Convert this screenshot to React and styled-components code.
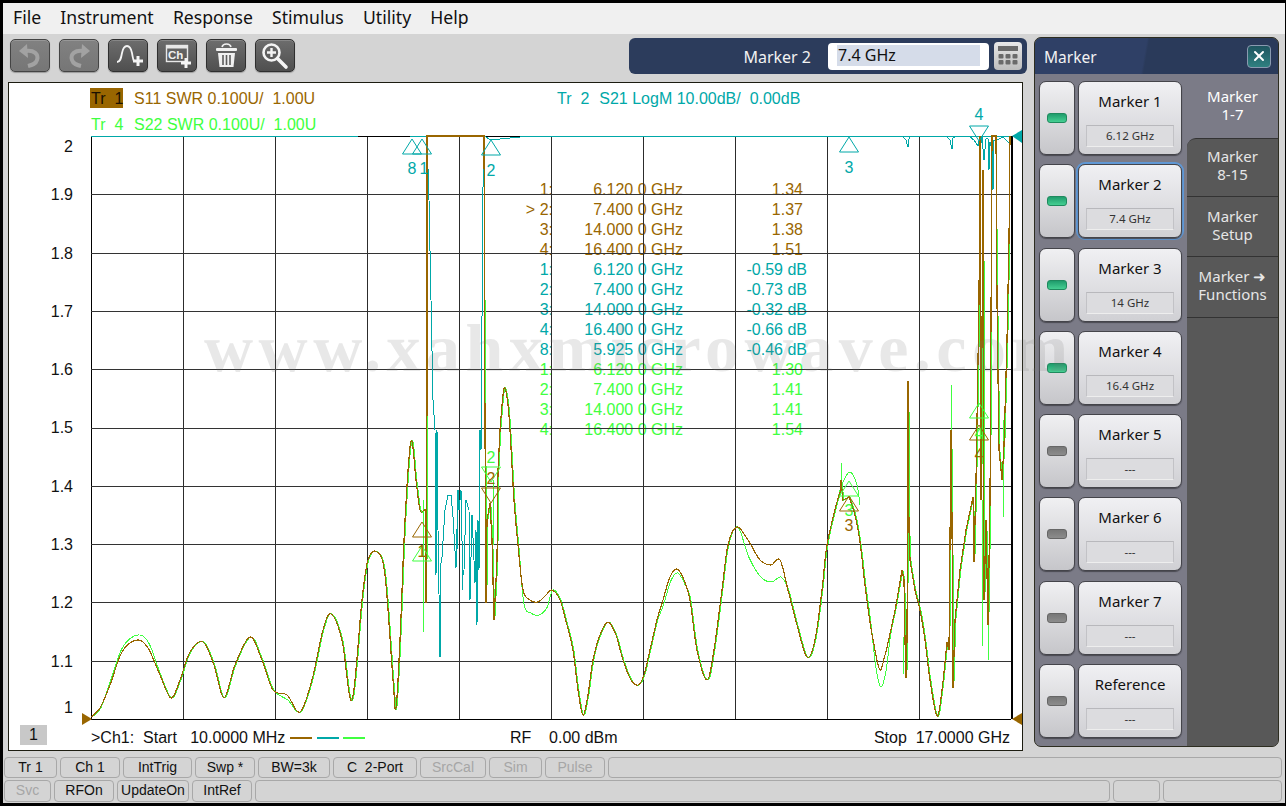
import React from 'react';
import styled, { createGlobalStyle } from 'styled-components';
import { X } from 'lucide-react';

const BROWN = '#996600';
const TEAL = '#00a8a8';
const GREEN = '#40ff40';
const UI_FONT = '"Noto Sans", "Open Sans", sans-serif';
const PLOT_FONT = '"Liberation Sans", Arial, sans-serif';

const GlobalStyle = createGlobalStyle`
    html, body { margin: 0; padding: 0; background: #000; }
    * { box-sizing: border-box; }
`;

const Screen = styled.div`
    position: relative;
    width: 1286px;
    height: 806px;
    padding: 3px 1px 3px 3px;
    background: #000;
    overflow: hidden;
    font-family: ${PLOT_FONT};
`;

const Window = styled.div`
    height: 800px;
    background: #d4d4d4;
    display: flex;
    flex-direction: column;
`;

const MenuBar = styled.div`
    height: 31px;
    flex: none;
    background: #f0f0f0;
    display: flex;
    align-items: center;
    gap: 19.2px;
    padding: 0 0 3px 10px;
    font-family: ${UI_FONT};
    font-size: 17.6px;
    color: #111;
`;

const Workspace = styled.div`
    height: 722px;
    flex: none;
    display: flex;
`;

const LeftColumn = styled.div`
    width: 1031px;
    flex: none;
`;

const ToolBar = styled.div`
    height: 48px;
    display: flex;
    align-items: flex-start;
    gap: 9px;
    padding: 5px 0 0 7px;
`;

const ToolButton = styled.div`
    width: 40px;
    height: 33px;
    border-radius: 5px;
    border: 1px solid ${p => (p.$disabled ? '#444' : '#2f2f2f')};
    background: ${p => (p.$disabled ? 'linear-gradient(#818181, #767676)' : 'linear-gradient(#6d6d6d, #4f4f4f)')};
    box-shadow: 0 1px 1px #9a9a9a, inset 0 1px 0 rgba(255,255,255,.18);
    svg { display: block; }
`;

const EntryBar = styled.div`
    margin: -1px 7px 0 auto;
    width: 398px;
    height: 36px;
    border-radius: 6px;
    background: #2c3c5c;
    display: flex;
    align-items: center;
    justify-content: flex-end;
    padding-right: 5px;
`;

const EntryLabel = styled.span`
    color: #f2f2f2;
    font-family: ${UI_FONT};
    font-size: 16px;
    margin-right: 17px;
    padding-top: 2px;
`;

const EntryInput = styled.div`
    width: 161px;
    height: 27px;
    border-radius: 4px;
    background: #fff;
    padding: 2px 9px;
`;

const EntrySelection = styled.div`
    height: 21px;
    line-height: 21px;
    padding-left: 1px;
    background: #d5dce9;
    color: #111;
    font-family: ${UI_FONT};
    font-size: 16px;
`;

const CalcButton = styled.div`
    width: 28px;
    height: 28px;
    margin-left: 5px;
    border-radius: 4px;
    background: linear-gradient(#e8e8e8, #bdbdbd);
    svg { display: block; }
`;

const Chart = styled.div`
    margin-left: 5px;
    width: 1015px;
    height: 669px;
    border: 1px solid #1c1c10;
    background: #fff;
    font-size: 16px;
`;

const ChartHeader = styled.div`
    height: 53px;
    padding: 5px 0 0 81px;
    display: grid;
    grid-template-columns: 467px 1fr;
    grid-auto-rows: 20px;
    row-gap: 6px;
    line-height: 21px;
    white-space: pre;
`;

const TraceTitle = styled.div`
    display: flex;
    gap: ${p => p.$gap || 11}px;
    color: ${p => p.$color};
`;

const TraceTag = styled.span`
    width: 33px;
    background: ${p => (p.$active ? BROWN : 'transparent')};
    color: ${p => (p.$active ? '#1a1000' : 'inherit')};
    padding-left: 1px;
`;

const PlotRow = styled.div`
    height: 583px;
    display: flex;
`;

const AxisLabels = styled.div`
    width: 82px;
    flex: none;
    padding: 1px 18px 0 0;
    display: grid;
    grid-template-rows: 48.3px repeat(8, 58.3px) 46px 20px;
    text-align: right;
    line-height: 20px;
    color: #111;
`;

const Plot = styled.div`
    position: relative;
    width: 920px;
    height: 583px;
    svg {
        position: relative;
        z-index: 1;
        display: block;
        overflow: visible;
    }
`;

const Readout = styled.div`
    position: absolute;
    left: 429px;
    top: 44px;
    display: grid;
    grid-template-columns: 33px 130px 124px;
    grid-auto-rows: 20px;
    line-height: 20px;
    white-space: pre;
`;

const ReadoutCell = styled.span`
    text-align: right;
    color: ${p => p.$color};
    padding-right: ${p => p.$pad || 0}px;
`;

const ChartFooter = styled.div`
    height: 31px;
    display: grid;
    grid-template-columns: 82px 419px 1fr auto;
    align-items: end;
    padding: 0 12px 2px 0;
    color: #111;
    white-space: pre;
    line-height: 20px;
`;

const ChannelBox = styled.div`
    width: 27px;
    height: 20px;
    margin: 0 0 3px 11px;
    background: #c8c8c8;
    text-align: center;
`;

const StartGroup = styled.div`
    display: flex;
    align-items: center;
`;

const LegendDash = styled.span`
    width: 22px;
    height: 2px;
    margin-left: ${p => p.$gap}px;
    background: ${p => p.$color};
`;

const MarkerPanel = styled.div`
    width: 245px;
    height: 710px;
    flex: none;
    margin-top: 3px;
    border-radius: 7px;
    overflow: hidden;
    background: #585858;
    border: 1px solid #2d2d20;
    display: flex;
    flex-direction: column;
`;

const PanelHeader = styled.div`
    height: 36px;
    flex: none;
    background: linear-gradient(100deg, #2f4066 0 45%, #2a3a5a 46%);
    color: #f2f2f2;
    font-family: ${UI_FONT};
    font-size: 15.5px;
    display: flex;
    align-items: center;
    justify-content: space-between;
    padding: 0 7px 0 9px;
    span { padding-top: 2px; }
`;

const CloseButton = styled.div`
    width: 24px;
    height: 23px;
    border-radius: 4px;
    border: 1px solid #8a9ab0;
    background: linear-gradient(#1f5560, #2f8080);
    color: #fff;
    display: flex;
    align-items: center;
    justify-content: center;
`;

const PanelBody = styled.div`
    flex: 1;
    display: flex;
    min-height: 0;
`;

const ButtonColumn = styled.div`
    width: 152px;
    flex: none;
    background: #7b7b87;
    padding: 7px 0 0 4px;
    display: grid;
    grid-template-columns: 36px 104px;
    grid-auto-rows: 74px;
    column-gap: 3px;
    row-gap: 9.3px;
`;

const LedButton = styled.div`
    border-radius: 7px;
    border: 1px solid #44444a;
    background: linear-gradient(#f0f0f2, #c6c6ca);
    box-shadow: 0 1px 1px #4a4a52;
    display: flex;
    align-items: center;
    justify-content: center;
`;

const Led = styled.span`
    width: 20px;
    height: 10px;
    border-radius: 3px;
    border: 1px solid ${p => (p.$on ? '#1f8a5e' : '#666')};
    background: ${p => (p.$on ? 'linear-gradient(#1f9c6c, #45cf92)' : 'linear-gradient(#777, #8c8c8c)')};
`;

const SoftKey = styled.div`
    border-radius: 7px;
    border: 1px solid #44444a;
    background: linear-gradient(#f0f0f3, #d0d0d4);
    box-shadow: 0 1px 1px #4a4a52${p => (p.$selected ? ', 0 0 0 2px #5f97d4' : '')};
    padding-top: 9px;
    text-align: center;
    font-family: ${UI_FONT};
    color: #111;
`;

const SoftKeyTitle = styled.div`
    font-size: 15px;
    line-height: 20px;
`;

const SoftKeyValue = styled.div`
    width: 88px;
    height: 22px;
    margin: 14px auto 0;
    border: 1px solid #c2c2c6;
    border-top-color: #b8b8bc;
    border-bottom-color: #eeeeee;
    background: #dcdcdf;
    font-size: 11.5px;
    line-height: 20px;
    color: #333;
`;

const TabColumn = styled.div`
    flex: 1;
    display: flex;
    flex-direction: column;
    background: #585858;
`;

const Tab = styled.div`
    height: ${p => p.$height}px;
    flex: none;
    padding-top: ${p => p.$pad}px;
    text-align: center;
    font-family: ${UI_FONT};
    font-size: 15px;
    line-height: 18px;
    color: ${p => (p.$active ? '#fff' : '#e6e6e6')};
    background: ${p => (p.$active ? '#7b7b87' : '#585858')};
    border-top: ${p => (p.$active ? 'none' : '1px solid #333')};
    border-top-left-radius: ${p => (p.$first ? '9px' : '0')};
`;

const ActiveTabCorner = styled.div`
    background: #7b7b87;
`;

const StatusRows = styled.div`
    padding: 1px 0 0 1px;
    display: flex;
    flex-direction: column;
    gap: 2px;
`;

const StatusRow = styled.div`
    display: flex;
    gap: 3px;
    height: ${p => p.$height}px;
`;

const StatusCell = styled.div`
    width: ${p => p.$width}px;
    flex: none;
    border: 1px solid #a8a8a8;
    border-radius: 4px;
    text-align: center;
    font-size: 14px;
    line-height: 19px;
    white-space: pre;
    color: ${p => (p.$off ? '#a6a6a6' : '#111')};
`;

const Watermark = styled.div`
    position: absolute;
    left: 204px;
    top: 309px;
    font-family: "Liberation Serif", serif;
    font-weight: 700;
    font-size: 68px;
    letter-spacing: 5.5px;
    line-height: 78px;
    white-space: nowrap;
    color: rgba(120, 120, 120, .17);
    pointer-events: none;
    z-index: 5;
`;

// smooth curve through the given points
function curve(pts) {
    let d = `M${pts[0][0]} ${pts[0][1]}`;
    for (let i = 0; i < pts.length - 1; i++) {
        const p0 = pts[i - 1] || pts[i];
        const p1 = pts[i];
        const p2 = pts[i + 1];
        const p3 = pts[i + 2] || p2;
        const c1x = p1[0] + (p2[0] - p0[0]) / 6;
        const c1y = p1[1] + (p2[1] - p0[1]) / 6;
        const c2x = p2[0] - (p3[0] - p1[0]) / 6;
        const c2y = p2[1] - (p3[1] - p1[1]) / 6;
        d += `C${c1x} ${c1y} ${c2x} ${c2y} ${p2[0]} ${p2[1]}`;
    }
    return d;
}

const line = pts => 'M' + pts.map(p => p.join(' ')).join('L');

// S11 is built from smooth stretches and raw spikes, in sweep order
const S11_PARTS = [
    { smooth: [[91,717],[100,708],[110,685],[122,652],[137,640],[148,648],[160,675],[171,698],[180,680],[190,652],[203,642],[214,665],[224,698],[235,665],[250,637],[262,660],[273,690],[287,695],[300,712],[312,680],[323,630],[331,614],[342,640],[352,700],[362,600],[368,560],[377,552],[385,575],[393,680],[396,708],[400,640],[405,520],[411,441],[416,480],[420,510],[424,510]] },
    { raw: [[424,510],[426,510],[426,603],[427,400],[427,136],[484,136],[485,430],[486,603],[487,520],[490,503],[492,540],[494,620],[497,560],[498,470],[500,430]] },
    { smooth: [[500,430],[503,395],[505,388],[508,405],[510,430],[514,500],[518,545],[523,590],[530,600],[538,602],[546,595],[552,590],[560,600],[567,625],[573,650],[578,690],[583,715],[588,695],[593,660],[600,635],[608,622],[616,635],[623,660],[631,680],[638,685],[644,675],[650,650],[657,620],[663,600],[670,577],[677,569],[684,580],[690,600],[697,650],[707,680],[714,650],[722,590],[728,545],[737,527],[748,540],[760,560],[771,565],[780,560],[788,590],[797,625],[807,657],[815,640],[822,590],[827,545],[837,502],[841,490]] },
    { raw: [[841,490],[841,480],[843,500],[849,497]] },
    { smooth: [[849,497],[855,515],[860,542],[865,585],[870,622],[875,650],[880,670],[885,655],[890,634],[896,605],[902,570]] },
    { raw: [[902,570],[904,580],[905,640],[906,678],[907,640],[908,381],[909,530],[910,560]] },
    { smooth: [[910,560],[915,590],[920,610],[925,640],[930,680],[937,716],[942,690],[947,642]] },
    { raw: [[947,642],[949,650],[951,430],[952,520],[953,688],[955,620],[960,570],[966,530],[973,497],[974,562],[976,480],[979,300],[980,136],[981,500],[983,170],[984,600],[986,520],[988,625],[990,500],[992,136],[996,136],[997,300],[999,450],[1002,480],[1004,445],[1007,340],[1009,240],[1010,136]] },
];

function s22Offset(x) {
    if (x > 108 && x < 160) return -5;
    if (x > 280 && x < 300) return 5;
    if (x > 520 && x < 550) return 13;
    if (x > 660 && x < 690) return 4;
    if (x > 742 && x < 785) return 17;
    if (x > 873 && x < 886) return 17;
    return 0;
}

const partsToPath = (parts, mapPoint) => parts.map(part => {
    if (part.smooth) return curve(part.smooth.map(mapPoint));
    return line(part.raw.map(mapPoint));
}).join('');

const S11_PATH = partsToPath(S11_PARTS, p => p);
const S22_PATH = partsToPath(S11_PARTS, ([x, y]) => (y <= 137 ? [x, y] : [x + 0.8, y + s22Offset(x)]));
const S22_SPIKES = [
    [[423,500],[423,632]], [[493,480],[493,545]], [[841,463],[841,490]], [[905,600],[903,675]],
    [[951,385],[951,440]], [[982,500],[982,646]], [[988,560],[988,660]], [[1003,420],[1003,517]],
    [[1009,143],[1009,190]], [[996,180],[996,200]],
];
const S22_ARC = curve([[838,497],[843,482],[850,472],[857,485],[860,505]]);

const S21_PATHS = [
    [[91,136],[358,136]],
    [[410,136],[427,136],[429,200],[431,300],[433,400],[435,430],[436,575],[437,430],[438,530],[440,657],[440,570],[442,557],[445,510],[448,495],[451,495],[453,517],[456,568],[458,490],[457,550],[458,490],[459,510],[461,490],[463,590],[462,580],[464,570],[466,500],[469,510],[470,600],[472,515],[475,583],[476,530],[477,625],[478,520],[479,570],[480,430],[481,450],[483,187],[484,136],[491,140],[500,139],[520,137],[1011,136]],
    [[903,137],[906,140],[908,147],[909,139],[910,137]],
    [[947,137],[950,140],[952,149],[953,138],[955,137]],
    [[970,137],[974,140],[978,146],[980,137],[980,150],[982,137],[984,160],[986,139],[988,138],[989,170],[990,142],[992,150],[992,170],[993,190],[994,140],[997,140],[1003,137],[1009,143],[1010,160]],
];

const MARKERS = [
    { x: 412, tip: 139, dir: 1, color: TEAL, label: '8', ly: 168 },
    { x: 422, tip: 139, dir: 1, color: TEAL, label: '1', ly: 168, lx: 424 },
    { x: 491, tip: 140, dir: 1, color: TEAL, label: '2', ly: 170 },
    { x: 849, tip: 137, dir: 1, color: TEAL, label: '3', ly: 167 },
    { x: 979, tip: 141, dir: -1, color: TEAL, label: '4', ly: 114 },
    { x: 422, tip: 546, dir: 1, color: GREEN, label: '1', ly: 551 },
    { x: 491, tip: 482, dir: -1, color: GREEN, label: '2', ly: 457 },
    { x: 849, tip: 481, dir: 1, color: GREEN, label: '3', ly: 510 },
    { x: 979, tip: 403, dir: 1, color: GREEN, label: '4', ly: 433 },
    { x: 422, tip: 522, dir: 1, color: BROWN, label: '1', ly: 551 },
    { x: 491, tip: 503, dir: -1, color: BROWN, label: '2', ly: 478 },
    { x: 849, tip: 496, dir: 1, color: BROWN, label: '3', ly: 525 },
    { x: 979, tip: 425, dir: 1, color: BROWN, label: '4', ly: 454 },
];

function MarkerGlyph({ x, tip, dir, color, label, ly, lx }) {
    const base = tip + dir * 15;
    return (
        <g>
            <polygon points={`${x},${tip} ${x - 9.5},${base} ${x + 9.5},${base}`} fill="none" stroke={color} strokeWidth="1" />
            <text x={lx || x} y={ly + 6} textAnchor="middle" fontSize="16" fill={color} fontFamily={PLOT_FONT}>{label}</text>
        </g>
    );
}

function TraceGraph() {
    const columns = Array.from({ length: 11 }, (_, i) => 91 + i * 92);
    const rows = Array.from({ length: 11 }, (_, i) => Math.round(136 + i * 58.3));
    return (
        <svg width="920" height="583" viewBox="91 136 920 583">
            <g shapeRendering="crispEdges">
                {columns.map(x => (
                    <line key={x} x1={x + 0.5} x2={x + 0.5} y1="136" y2="719" stroke={x === 91 || x === 1011 ? '#000' : '#2c2c2c'} strokeWidth={x === 1011 ? 2 : 1} />
                ))}
                {rows.map(y => (
                    <line key={y} x1="91" x2="1011" y1={y + 0.5} y2={y + 0.5} stroke={y === 136 || y > 718 ? '#000' : '#333'} strokeWidth="1" />
                ))}
            </g>
            <g fill="none" strokeWidth="1" shapeRendering="crispEdges">
                {S21_PATHS.map((pts, i) => <path key={i} d={line(pts)} stroke={TEAL} />)}
                <path d={S22_PATH} stroke={GREEN} />
                <path d={S22_ARC} stroke={GREEN} />
                {S22_SPIKES.map((pts, i) => <path key={i} d={line(pts)} stroke={GREEN} />)}
                <path d={S11_PATH} stroke={BROWN} strokeWidth="1.2" />
            </g>
            {MARKERS.map((m, i) => <MarkerGlyph key={i} {...m} />)}
            <polygon points="1012,136 1022,130 1022,143" fill={TEAL} />
            <polygon points="82,713 82,725 92,719" fill={BROWN} />
            <polygon points="1022,713 1022,725 1012,719" fill={BROWN} />
        </svg>
    );
}

const READOUT_ROWS = [
    [BROWN, '1:', '6.120 0 GHz', '1.34'], [BROWN, '> 2:', '7.400 0 GHz', '1.37'],
    [BROWN, '3:', '14.000 0 GHz', '1.38'], [BROWN, '4:', '16.400 0 GHz', '1.51'],
    [TEAL, '1:', '6.120 0 GHz', '-0.59 dB'], [TEAL, '2:', '7.400 0 GHz', '-0.73 dB'],
    [TEAL, '3:', '14.000 0 GHz', '-0.32 dB'], [TEAL, '4:', '16.400 0 GHz', '-0.66 dB'],
    [TEAL, '8:', '5.925 0 GHz', '-0.46 dB'], [GREEN, '1:', '6.120 0 GHz', '1.30'],
    [GREEN, '2:', '7.400 0 GHz', '1.41'], [GREEN, '3:', '14.000 0 GHz', '1.41'],
    [GREEN, '4:', '16.400 0 GHz', '1.54'],
];

const SOFT_KEYS = [
    { title: 'Marker 1', value: '6.12 GHz', on: true },
    { title: 'Marker 2', value: '7.4 GHz', on: true, selected: true },
    { title: 'Marker 3', value: '14 GHz', on: true },
    { title: 'Marker 4', value: '16.4 GHz', on: true },
    { title: 'Marker 5', value: '---' },
    { title: 'Marker 6', value: '---' },
    { title: 'Marker 7', value: '---' },
    { title: 'Reference', value: '---' },
];

const STATUS_TOP = [
    ['Tr 1', 53], ['Ch 1', 60], ['IntTrig', 69], ['Swp *', 60], ['BW=3k', 72], ['C  2-Port', 84],
    ['SrcCal', 66, true], ['Sim', 53, true], ['Pulse', 60, true], ['', 674],
];

const STATUS_BOTTOM = [
    ['Svc', 47, true], ['RFOn', 60], ['UpdateOn', 72], ['IntRef', 60], ['', 855], ['', 47], ['', 119],
];

const AXIS = ['2', '1.9', '1.8', '1.7', '1.6', '1.5', '1.4', '1.3', '1.2', '1.1', '1'];

const UndoIcon = ({ flip }) => (
    <svg width="38" height="31" viewBox="0 0 38 31">
        <g transform={flip ? 'translate(38 0) scale(-1 1)' : undefined}>
            <polygon points="8,11 16,4 17,18" fill="#a2a2a2" />
            <path d="M15 11 C23 10 28 14 26 20 C25 24 21 25 17 26" fill="none" stroke="#a2a2a2" strokeWidth="4" />
        </g>
    </svg>
);

const PulseIcon = () => (
    <svg width="38" height="31" viewBox="0 0 38 31">
        <path d="M8 22 C11 22 12 19 13 13 C14 8 15 6 18 6 C21 6 22 8 23 13 C24 18 24 20 25 21" fill="none" stroke="#f4f4f4" strokeWidth="1.8" />
        <path d="M29 16 V26 M24 21 H34" stroke="#f4f4f4" strokeWidth="3" />
    </svg>
);

const ChannelIcon = () => (
    <svg width="38" height="31" viewBox="0 0 38 31">
        <rect x="8.5" y="5.5" width="21" height="16" fill="none" stroke="#e8e8e8" strokeWidth="1.4" />
        <rect x="8" y="5" width="22" height="3.5" fill="#e8e8e8" />
        <text x="10" y="19" fontSize="11.5" fontWeight="700" fill="#f0f0f0" fontFamily={PLOT_FONT}>Ch</text>
        <path d="M28 18 V28 M23 23 H33" stroke="#f4f4f4" strokeWidth="3" />
    </svg>
);

const TrashIcon = () => (
    <svg width="38" height="31" viewBox="0 0 38 31">
        <path d="M15 7 C16 3 23 3 24 7" fill="none" stroke="#f0f0f0" strokeWidth="1.6" />
        <rect x="9" y="8" width="21" height="3" rx="1" fill="#f0f0f0" />
        <path d="M11 13 H28 L26.5 27 H12.5 Z" fill="#f0f0f0" />
        <path d="M16 15 V25 M19.5 15 V25 M23 15 V25" stroke="#5c5c5c" strokeWidth="1.6" />
    </svg>
);

const ZoomIcon = () => (
    <svg width="38" height="31" viewBox="0 0 38 31">
        <circle cx="15.5" cy="12.5" r="8" fill="none" stroke="#f4f4f4" strokeWidth="2.6" />
        <path d="M15.5 8 V17 M11 12.5 H20" stroke="#f4f4f4" strokeWidth="2.4" />
        <path d="M21.5 18.5 L30 27" stroke="#f4f4f4" strokeWidth="3.6" strokeLinecap="round" />
    </svg>
);

const CalcIcon = () => (
    <svg width="28" height="28" viewBox="0 0 28 28" fill="#6a6a6a">
        <rect x="4" y="4" width="20" height="5" />
        {[4.5, 11.5, 18.5].map(x => [12, 18].map(y => (
            <rect key={`${x}-${y}`} x={x} y={y} width="5" height="4.5" rx="1" />
        )))}
    </svg>
);

function App() {
    return (
        <Screen>
            <GlobalStyle />
            <Window>
                <MenuBar>
                    {['File', 'Instrument', 'Response', 'Stimulus', 'Utility', 'Help'].map(m => <span key={m}>{m}</span>)}
                </MenuBar>
                <Workspace>
                    <LeftColumn>
                        <ToolBar>
                            <ToolButton $disabled><UndoIcon /></ToolButton>
                            <ToolButton $disabled><UndoIcon flip /></ToolButton>
                            <ToolButton><PulseIcon /></ToolButton>
                            <ToolButton><ChannelIcon /></ToolButton>
                            <ToolButton><TrashIcon /></ToolButton>
                            <ToolButton><ZoomIcon /></ToolButton>
                            <EntryBar>
                                <EntryLabel>Marker 2</EntryLabel>
                                <EntryInput><EntrySelection>7.4 GHz</EntrySelection></EntryInput>
                                <CalcButton><CalcIcon /></CalcButton>
                            </EntryBar>
                        </ToolBar>
                        <Chart>
                            <ChartHeader>
                                <TraceTitle $color={BROWN}>
                                    <TraceTag $active>Tr  1</TraceTag>
                                    <span>S11 SWR 0.100U/  1.00U</span>
                                </TraceTitle>
                                <TraceTitle $color={TEAL} $gap={10}>
                                    <span>Tr  2</span>
                                    <span>S21 LogM 10.00dB/  0.00dB</span>
                                </TraceTitle>
                                <TraceTitle $color={GREEN}>
                                    <TraceTag>Tr  4</TraceTag>
                                    <span>S22 SWR 0.100U/  1.00U</span>
                                </TraceTitle>
                            </ChartHeader>
                            <PlotRow>
                                <AxisLabels>
                                    {AXIS.map(v => <span key={v}>{v}</span>)}
                                </AxisLabels>
                                <Plot>
                                    <Readout>
                                        {READOUT_ROWS.map(([color, idx, freq, val], i) => (
                                            <React.Fragment key={i}>
                                                <ReadoutCell $color={color}>{idx}</ReadoutCell>
                                                <ReadoutCell $color={color}>{freq}</ReadoutCell>
                                                <ReadoutCell $color={color} $pad={val.includes('dB') ? 0 : 4}>{val}</ReadoutCell>
                                            </React.Fragment>
                                        ))}
                                    </Readout>
                                    <TraceGraph />
                                </Plot>
                            </PlotRow>
                            <ChartFooter>
                                <ChannelBox>1</ChannelBox>
                                <StartGroup>
                                    <span>&gt;Ch1:  Start   10.0000 MHz</span>
                                    <LegendDash $color={BROWN} $gap={5} />
                                    <LegendDash $color={TEAL} $gap={5} />
                                    <LegendDash $color={GREEN} $gap={4} />
                                </StartGroup>
                                <span>RF    0.00 dBm</span>
                                <span>Stop  17.0000 GHz</span>
                            </ChartFooter>
                        </Chart>
                    </LeftColumn>
                    <MarkerPanel>
                        <PanelHeader>
                            <span>Marker</span>
                            <CloseButton><X size={16} strokeWidth={3} /></CloseButton>
                        </PanelHeader>
                        <PanelBody>
                            <ButtonColumn>
                                {SOFT_KEYS.map(key => (
                                    <React.Fragment key={key.title}>
                                        <LedButton><Led $on={key.on} /></LedButton>
                                        <SoftKey $selected={key.selected}>
                                            <SoftKeyTitle>{key.title}</SoftKeyTitle>
                                            <SoftKeyValue>{key.value}</SoftKeyValue>
                                        </SoftKey>
                                    </React.Fragment>
                                ))}
                            </ButtonColumn>
                            <TabColumn>
                                <Tab $active $height={64} $pad={13}>Marker<br />1-7</Tab>
                                <ActiveTabCorner>
                                    <Tab $first $height={58} $pad={8}>Marker<br />8-15</Tab>
                                </ActiveTabCorner>
                                <Tab $height={60} $pad={10}>Marker<br />Setup</Tab>
                                <Tab $height={61} $pad={10}>Marker ➜<br />Functions</Tab>
                                <Tab $height={430} $pad={0} />
                            </TabColumn>
                        </PanelBody>
                    </MarkerPanel>
                </Workspace>
                <StatusRows>
                    <StatusRow $height={21}>
                        {STATUS_TOP.map(([label, width, off], i) => <StatusCell key={i} $width={width} $off={off}>{label}</StatusCell>)}
                    </StatusRow>
                    <StatusRow $height={22}>
                        {STATUS_BOTTOM.map(([label, width, off], i) => <StatusCell key={i} $width={width} $off={off}>{label}</StatusCell>)}
                    </StatusRow>
                </StatusRows>
            </Window>
            <Watermark>www.xahxmicrowave.com</Watermark>
        </Screen>
    );
}

export default App;
